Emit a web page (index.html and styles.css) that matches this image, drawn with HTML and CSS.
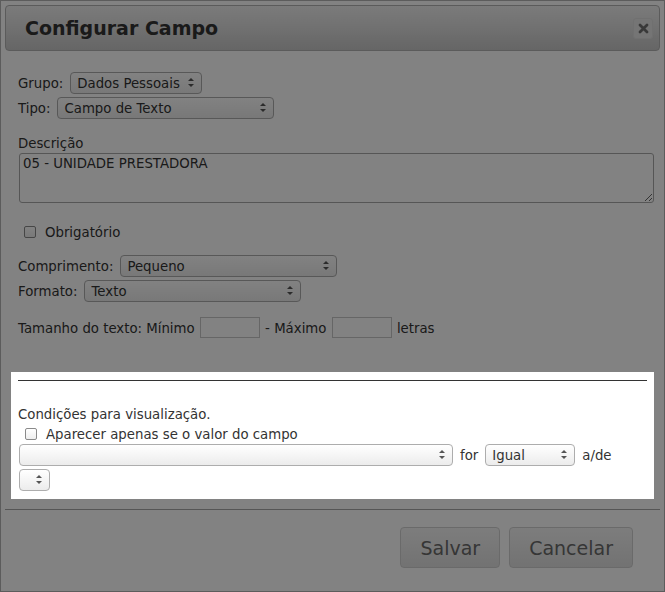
FILE: index.html
```html
<!DOCTYPE html>
<html lang="pt-BR">
<head>
    <meta charset="UTF-8">
    <title>Configurar Campo</title>
    <link rel="stylesheet" href="styles.css">
</head>
<body>
    <div class="dialog">
        <div class="dialog-header">
            <h2>Configurar Campo</h2>
            <button class="close-btn" title="Fechar">
                <svg width="11" height="11" viewBox="0 0 11 11">
                    <path d="M2 2 L9 9 M9 2 L2 9" stroke="#707070" stroke-width="2.8" stroke-linecap="round"/>
                </svg>
            </button>
        </div>

        <div class="dialog-body">
            <div class="row">
                <label>Grupo:</label>
                <span class="sel sel-grupo"><select><option>Dados Pessoais</option></select></span>
            </div>
            <div class="row gap3">
                <label>Tipo:</label>
                <span class="sel sel-wide"><select><option>Campo de Texto</option></select></span>
            </div>

            <label class="block-label">Descrição</label>
            <textarea class="descricao">05 - UNIDADE PRESTADORA</textarea>

            <div class="check-row obrigatorio">
                <input type="checkbox" class="chk" id="obrig">
                <label for="obrig">Obrigatório</label>
            </div>

            <div class="row comprimento">
                <label>Comprimento:</label>
                <span class="sel sel-wide"><select><option>Pequeno</option></select></span>
            </div>
            <div class="row gap3">
                <label>Formato:</label>
                <span class="sel sel-wide"><select><option>Texto</option></select></span>
            </div>

            <div class="tamanho">
                Tamanho do texto: Mínimo <input type="text" class="num"> - Máximo <input type="text" class="num"> letras
            </div>

            <!-- area em destaque -->
            <div class="spotlight">
                <hr>
                <p class="cond-title">Condições para visualização.</p>
                <div class="check-row aparecer">
                    <input type="checkbox" class="chk" id="aparecer">
                    <label for="aparecer">Aparecer apenas se o valor do campo</label>
                </div>
                <div class="cond-row">
                    <span class="sel sel-campo"><select><option></option></select></span>
                    <span>for</span>
                    <span class="sel sel-igual"><select><option>Igual</option></select></span>
                    <span>a/de</span>
                </div>
                <div class="cond-row gap3">
                    <span class="sel sel-valor"><select><option></option></select></span>
                </div>
            </div>
        </div>

        <div class="dialog-footer">
            <button class="btn">Salvar</button>
            <button class="btn">Cancelar</button>
        </div>
    </div>
</body>
</html>
```

FILE: styles.css
```css
body {
    margin: 0;
    font-family: 'DejaVu Sans', Verdana, sans-serif;
    font-size: 13.3px;
    color: #333;
    background: #fff;
}

.dialog {
    width: 665px;
    height: 592px;
    box-sizing: border-box;
    border: 1px solid #b4b4b4;
    background: #fff;
}

.dialog-header {
    display: flex;
    align-items: center;
    height: 46px;
    box-sizing: border-box;
    margin: 4px 4px 0;
    padding: 0 6px 0 19px;
    border: 1px solid #b2b2b2;
    border-radius: 4px;
    background: linear-gradient(#f1f1f1, #c8c8c8);
}

.dialog-header h2 {
    margin: 0;
    font-size: 19px;
    line-height: 24px;
    font-weight: bold;
    color: #333;
}

.close-btn {
    margin-left: auto;
    width: 20px;
    height: 21px;
    padding: 0;
    border: 1px solid #dcdcdc;
    border-radius: 3px;
    background: #e6e6e6;
    display: flex;
    align-items: center;
    justify-content: center;
}

.dialog-body {
    padding: 21px 17px 0;
}

.row {
    display: flex;
    align-items: center;
    gap: 7px;
    height: 22px;
}

.gap3 {
    margin-top: 3px;
}

.comprimento {
    margin-top: 15px;
}

/* selects com setas desenhadas */
.sel {
    position: relative;
    display: inline-block;
    height: 22px;
}

.sel select {
    -webkit-appearance: none;
    appearance: none;
    width: 100%;
    height: 22px;
    margin: 0;
    padding: 0 20px 0 6px;
    font-family: 'DejaVu Sans', Verdana, sans-serif;
    font-size: 13.3px;
    color: #333;
    border: 1px solid #adadad;
    border-radius: 4px;
    background: linear-gradient(#fff, #ececec);
}

.sel::before,
.sel::after {
    content: '';
    position: absolute;
    right: 8px;
    border-left: 3px solid transparent;
    border-right: 3px solid transparent;
    pointer-events: none;
}

.sel::before {
    top: 6px;
    border-bottom: 3px solid #555;
}

.sel::after {
    top: 12px;
    border-top: 3px solid #555;
}

.sel-grupo { width: 132px; }
.sel-wide { width: 217px; }
.sel-campo { width: 434px; margin-left: 1px; }
.sel-igual { width: 90px; }
.sel-valor { width: 31px; margin-left: 1px; }

.block-label {
    display: block;
    margin-top: 17px;
    line-height: 16px;
}

.descricao {
    display: block;
    width: 635px;
    height: 50px;
    box-sizing: border-box;
    margin: 1px 0 0 1px;
    padding: 2px 3px;
    font-family: 'DejaVu Sans', Verdana, sans-serif;
    font-size: 13.3px;
    color: #333;
    border: 1px solid #a9a9a9;
    border-radius: 3px;
}

.check-row {
    display: flex;
    align-items: center;
}

.obrigatorio {
    margin-top: 21px;
    height: 16px;
}

.chk {
    -webkit-appearance: none;
    appearance: none;
    width: 12px;
    height: 12px;
    margin: 0 9px 0 6px;
    border: 1px solid #8a8a8a;
    border-radius: 2px;
    background: linear-gradient(#fff, #eee);
}

.tamanho {
    height: 24px;
    line-height: 24px;
    margin-top: 15px;
}

.num {
    width: 60px;
    height: 21px;
    box-sizing: border-box;
    margin: 0 1px;
    vertical-align: top;
    border: 1px solid #c8c8c8;
    padding: 0 3px;
}

.spotlight {
    position: relative;
    z-index: 1;
    margin: 31px -7px 0;
    padding: 8px 7px 8px;
    background: #fff;
    box-shadow: 0 0 0 2000px rgba(0, 0, 0, 0.49);
}

.spotlight hr {
    margin: 0;
    border: 0;
    border-top: 1px solid #333;
}

.cond-title {
    margin: 26px 0 0;
    line-height: 16px;
}

.aparecer {
    margin-top: 2px;
    height: 18px;
}

.aparecer .chk {
    margin-left: 7px;
}

.cond-row {
    display: flex;
    align-items: center;
    gap: 7px;
    height: 22px;
    margin-top: 1px;
}

.cond-row.gap3 {
    margin-top: 3px;
}

.dialog-footer {
    display: flex;
    justify-content: flex-end;
    gap: 9px;
    margin: 10px 4px 0;
    padding: 17px 27px 0 0;
    border-top: 1px solid #a8a8a8;
}

.btn {
    height: 41px;
    padding: 0 19px;
    font-family: 'DejaVu Sans', Verdana, sans-serif;
    font-size: 19px;
    color: #6a6a6a;
    border: 1px solid #d0d0d0;
    border-radius: 4px;
    background: linear-gradient(#f5f5f5, #e0e0e0);
}
```
